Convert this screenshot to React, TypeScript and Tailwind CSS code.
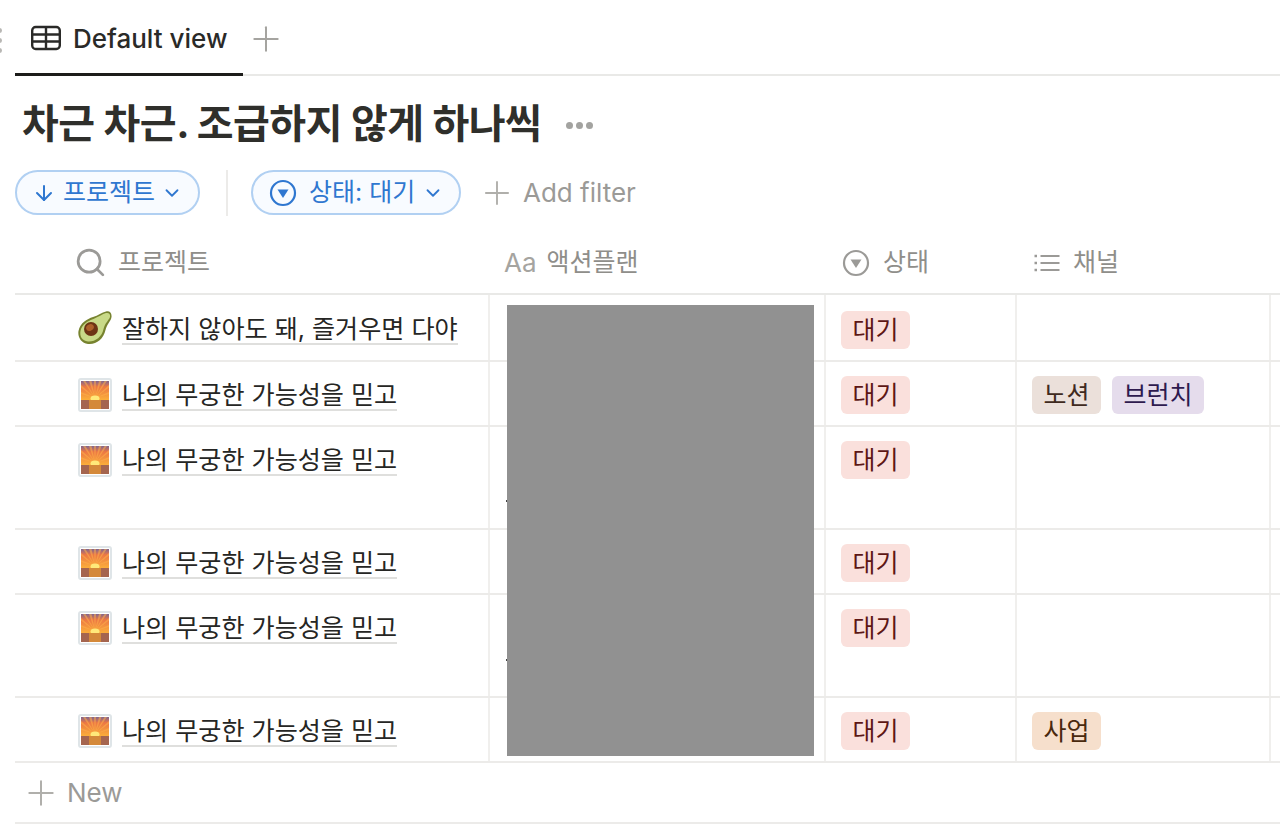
import React from 'react';
import { ChevronDown, ArrowDown, Plus, Search } from 'lucide-react';

const FONT = "font-['Inter','Noto_Sans_CJK_KR',sans-serif]";

const StatusIcon = ({ className }: { className: string }) => (
  <svg viewBox="0 0 28 28" className={className} fill="none">
    <circle cx="14" cy="14" r="12" stroke="currentColor" strokeWidth="2.2" />
    <path d="M8.5 10.5h11L14 19z" fill="currentColor" />
  </svg>
);

const TableIcon = () => (
  <svg viewBox="0 0 30 26" className="w-[30px] h-[26px] text-[#2a2a28]" fill="none" stroke="currentColor" strokeWidth="2.4">
    <rect x="1.2" y="2" width="27.6" height="22" rx="3.5" />
    <path d="M1.2 9.5h27.6M1.2 16.5h27.6M15 2v22" />
  </svg>
);

const ListIcon = () => (
  <svg viewBox="0 0 28 22" className="w-[28px] h-[22px] text-[#9b9a97]" fill="none" stroke="currentColor" strokeWidth="2">
    <path d="M7.5 4h19M7.5 11h19M7.5 18h19" />
    <path d="M1.5 4h2.5M1.5 11h2.5M1.5 18h2.5" strokeWidth="2.6" />
  </svg>
);

const Avocado = () => (
  <svg viewBox="0 0 34 34" className="w-[34px] h-[34px] mt-[1px] shrink-0">
    <path d="M28 .5C31.500-.5 34 2 33.500 6 33 10 29 13 27.500 19 25.500 28 18 34 10 33 3 32-.5 26 .5 20 2 12 9 8 15 6 20 4.500 24 1.500 28 .5z" fill="#77832f" />
    <path d="M28 2C31 1.500 32.500 3 32 6 31 9 27 12 25.500 18 24 26 17 31 10 30.500 4 30 1.500 25 2.500 20 4 13 10 10 15.500 8 20 6 24.500 3 28 2z" fill="#c9da88" />
    <circle cx="13" cy="18" r="7" fill="#6d3414" />
    <ellipse cx="12" cy="16.500" rx="4" ry="3.200" transform="rotate(-30 12 16.500)" fill="#ad6029" />
  </svg>
);

const Sunrise = () => (
  <div className="w-[34px] h-[34px] mt-[2px] shrink-0 rounded-[3px] border-2 border-[#dfe5e8] bg-white p-[1px]">
    <svg viewBox="0 0 28 28" className="w-full h-full block" preserveAspectRatio="none">
      <defs>
        <linearGradient id="sky" x1="0" y1="0" x2="0" y2="1">
          <stop offset="0" stopColor="#7f6590" />
          <stop offset="0.3" stopColor="#ec7744" />
          <stop offset="1" stopColor="#fbae3a" />
        </linearGradient>
      </defs>
      <rect width="28" height="19" fill="url(#sky)" />
      <path d="M14 17L2 0h2.500zM14 17L8 0h2.500zM14 17L13 0h2zM14 17L18 0h2.500zM14 17L23.500 0h2.500zM14 17L0 4v2.500zM14 17L0 11v2zM14 17L28 4v2.500zM14 17L28 11v2z" fill="#fdb14a" opacity="0.55" />
      <ellipse cx="14" cy="17.500" rx="4.500" ry="3" fill="#ffe97a" />
      <rect y="19" width="28" height="9" fill="#a5654f" />
      <rect x="8" y="19" width="12" height="9" fill="#d4893a" />
    </svg>
  </div>
);

const Tag = ({ label, bg, fg }: { label: string; bg: string; fg: string }) => (
  <span className={`inline-flex items-center h-[38px] px-[11.5px] rounded-[6px] text-[25px] leading-none ${bg} ${fg}`}>
    {label}
  </span>
);

const Pending = () => <Tag label="대기" bg="bg-[#fae0dc]" fg="text-[#5d1715]" />;

type Row = {
  height: string;
  title: string;
  avocado?: boolean;
  mark?: string;
  tags?: React.ReactNode;
};

const rows: Row[] = [
  { height: 'h-[67px]', title: '잘하지 않아도 돼, 즐거우면 다야', avocado: true },
  {
    height: 'h-[65px]',
    title: '나의 무궁한 가능성을 믿고',
    tags: (
      <>
        <Tag label="노션" bg="bg-[#ebe0da]" fg="text-[#3f2a20]" />
        <Tag label="브런치" bg="bg-[#e5dcec]" fg="text-[#2e1a4f]" />
      </>
    ),
  },
  { height: 'h-[103px]', title: '나의 무궁한 가능성을 믿고', mark: 'pt-[73px]' },
  { height: 'h-[65px]', title: '나의 무궁한 가능성을 믿고' },
  { height: 'h-[103px]', title: '나의 무궁한 가능성을 믿고', mark: 'pt-[64px]' },
  {
    height: 'h-[65px]',
    title: '나의 무궁한 가능성을 믿고',
    tags: <Tag label="사업" bg="bg-[#f6dfcc]" fg="text-[#49290e]" />,
  },
];

const gridCols = 'grid grid-cols-[475px_336px_191px_254px_9px]';

const App: React.FC = () => {
  return (
    <div className={`relative w-[1280px] h-[837px] overflow-hidden bg-white pl-[15px] ${FONT}`}>
      {/* Drag handle, cut off at the left edge */}
      <div className="absolute left-[-3px] top-[28px] flex flex-col gap-[5px]">
        <span className="w-[5px] h-[5px] rounded-full bg-[#b8b7b4]" />
        <span className="w-[5px] h-[5px] rounded-full bg-[#b8b7b4]" />
        <span className="w-[5px] h-[5px] rounded-full bg-[#b8b7b4]" />
      </div>

      {/* Tabs */}
      <div className="h-[76px] flex items-start border-b-2 border-[#e9e9e7]">
        <div className="w-[228px] h-[76px] border-b-[3px] border-[#1c1c1a] flex items-center gap-[12px] pl-[16px] pt-[3px] text-[26px] font-medium text-[#2a2a28]">
          <TableIcon />
          <span>Default view</span>
        </div>
        <Plus className="w-[40px] h-[40px] ml-[3px] mt-[19px] text-[#a5a4a0]" strokeWidth={1.2} />
      </div>

      {/* Title */}
      <div className="h-[94px] flex items-center pl-[7px] pt-[2px]">
        <h1 className="text-[40px] font-bold tracking-[-0.5px] text-[#2f2f2b] leading-none">
          차근 차근. 조급하지 않게 하나씩
        </h1>
        <div className="flex gap-[3px] ml-[25px] mt-[2px]">
          <span className="w-[7px] h-[7px] rounded-full bg-[#a3a3a0]" />
          <span className="w-[7px] h-[7px] rounded-full bg-[#a3a3a0]" />
          <span className="w-[7px] h-[7px] rounded-full bg-[#a3a3a0]" />
        </div>
      </div>

      {/* Filters */}
      <div className="h-[45px] flex items-center">
        <div className="w-[185px] h-[45px] rounded-full border-2 border-[#b1d0f2] bg-[#f8fbff] flex items-center pl-[15px] text-[25px] text-[#2f77d0]">
          <ArrowDown className="w-[24px] h-[24px]" strokeWidth={2} />
          <span className="ml-[7px]">프로젝트</span>
          <ChevronDown className="w-[22px] h-[22px] ml-[6px]" strokeWidth={2} />
        </div>
        <div className="w-[2px] h-[46px] bg-[#ecebe9] ml-[26px]" />
        <div className="w-[210px] h-[45px] ml-[23px] rounded-full border-2 border-[#b1d0f2] bg-[#f8fbff] flex items-center pl-[16px] text-[25px] text-[#2f77d0]">
          <StatusIcon className="w-[28px] h-[28px]" />
          <span className="ml-[12px]">상태: 대기</span>
          <ChevronDown className="w-[22px] h-[22px] ml-[7px]" strokeWidth={2} />
        </div>
        <Plus className="w-[38px] h-[38px] ml-[17px] text-[#b0afab]" strokeWidth={1.2} />
        <span className="ml-[7px] text-[26px] text-[#9b9a97]">Add filter</span>
      </div>

      {/* Table header */}
      <div className={`${gridCols} mt-[21px] h-[59px] border-b-2 border-[#e9e9e7] text-[25px] text-[#8f8e8a]`}>
        <div className="flex items-center pl-[59px] pb-[4px] gap-[11px]">
          <Search className="w-[33px] h-[33px] text-[#9b9a97]" strokeWidth={2} />
          <span>프로젝트</span>
        </div>
        <div className="flex items-center pl-[14px] pb-[4px] gap-[10px]">
          <span className="text-[26px] text-[#a5a4a0]">Aa</span>
          <span>액션플랜</span>
        </div>
        <div className="flex items-center pl-[16px] pb-[4px] gap-[13px]">
          <StatusIcon className="w-[28px] h-[28px] text-[#9b9a97]" />
          <span>상태</span>
        </div>
        <div className="flex items-center pl-[16px] pb-[4px] gap-[12px]">
          <ListIcon />
          <span>채널</span>
        </div>
        <div />
      </div>

      {/* Table rows */}
      {rows.map((row, i) => (
        <div key={i} className={`${gridCols} ${row.height} border-b-2 border-[#ecebe9]`}>
          <div className={`border-r-2 border-[#f0efed] pl-[63px] flex items-start ${i === 0 ? 'pt-[15px]' : 'pt-[14px]'}`}>
            <div className="w-[34px] flex justify-center">{row.avocado ? <Avocado /> : <Sunrise />}</div>
            <span className="ml-[10px] h-[35px] text-[25.1px] leading-[38px] text-[#262624] border-b-2 border-[#dfdfdd] whitespace-nowrap">
              {row.title}
            </span>
          </div>
          <div className={`border-r-2 border-[#f0efed] pl-[16px] ${row.mark ?? ''}`}>
            {row.mark && <div className="w-[3px] h-[2px] bg-[#444444]" />}
          </div>
          <div className={`border-r-2 border-[#f0efed] pl-[15px] ${i === 0 ? 'pt-[16px]' : 'pt-[14px]'}`}>
            <Pending />
          </div>
          <div className="border-r-2 border-[#f0efed] pl-[15px] pt-[14px] flex items-start gap-[11px]">
            {row.tags}
          </div>
          <div />
        </div>
      ))}

      {/* New row */}
      <div className="h-[61px] flex items-center pl-[6px] border-b-2 border-[#ecebe9] text-[26px] text-[#9b9a97]">
        <Plus className="w-[40px] h-[40px] text-[#b0afab]" strokeWidth={1.2} />
        <span className="ml-[6px]">New</span>
      </div>

      {/* Redacted block over the action plan column */}
      <div className="absolute left-[507px] top-[305px] w-[307px] h-[451px] bg-[#919191]" />
    </div>
  );
};

export default App;
